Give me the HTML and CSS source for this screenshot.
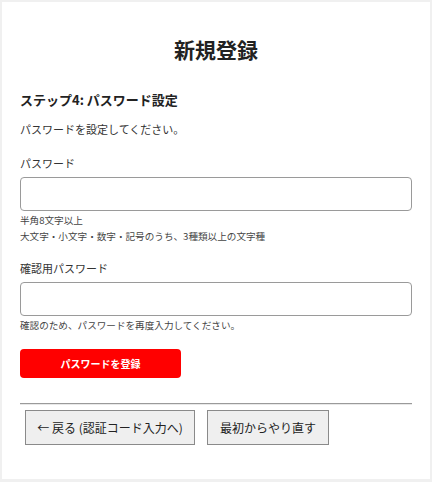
FILE: index.html
```html
<!DOCTYPE html>
<html lang="ja">
<head>
<meta charset="utf-8">
<title>新規登録</title>
<link rel="stylesheet" href="styles.css">
</head>
<body>
<main class="card">
  <h1 class="title">新規登録</h1>
  <h2 class="step">ステップ4: パスワード設定</h2>
  <p class="desc">パスワードを設定してください。</p>

  <div class="field">
    <label class="label" for="pw">パスワード</label>
    <input class="input" id="pw" type="password">
    <p class="hint">半角8文字以上<br>大文字・小文字・数字・記号のうち、3種類以上の文字種</p>
  </div>

  <div class="field field-2">
    <label class="label" for="pw2">確認用パスワード</label>
    <input class="input" id="pw2" type="password">
    <p class="hint">確認のため、パスワードを再度入力してください。</p>
  </div>

  <button class="submit" type="button">パスワードを登録</button>

  <hr class="divider">
  <div class="nav">
    <button class="nav-btn nav-back" type="button">← 戻る (認証コード入力へ)</button>
    <button class="nav-btn nav-restart" type="button">最初からやり直す</button>
  </div>
</main>
</body>
</html>
```

FILE: styles.css
```css
* { box-sizing: border-box; }

html, body {
  margin: 0;
  padding: 0;
}

body {
  background: #f0f0f0;
  padding: 2px 2px 3px 2px;
  font-family: "Noto Sans CJK JP", "Noto Sans", sans-serif;
  color: #333;
}

.card {
  background: #fff;
  padding: 32px 18px 34px 18px;
  min-height: 477px;
}

.title {
  margin: 0;
  font-size: 21px;
  line-height: 30px;
  font-weight: 700;
  text-align: center;
  color: #222;
}

.step {
  margin: 27px 0 0 0;
  font-size: 13px;
  line-height: 18px;
  font-weight: 700;
  color: #222;
}

.desc {
  margin: 12px 0 0 0;
  font-size: 11px;
  line-height: 16px;
}

.field {
  margin-top: 18px;
  display: flex;
  flex-direction: column;
}

.field-2 {
  margin-top: 16px;
}

.label {
  font-size: 11px;
  line-height: 16px;
  color: #333;
}

.input {
  margin-top: 6px;
  height: 34px;
  width: 100%;
  border: 1px solid #9a9a9a;
  border-radius: 4px;
  background: #fff;
  padding: 0 8px;
  font: inherit;
}

.hint {
  margin: 1px 0 0 0;
  font-size: 9.6px;
  line-height: 16px;
  color: #444;
}

.submit {
  margin-top: 16px;
  width: 161px;
  height: 29px;
  border: none;
  border-radius: 4px;
  background: #ff0000;
  color: #fff;
  font-family: inherit;
  font-size: 10px;
  font-weight: 700;
  padding: 0;
}

.divider {
  margin: 25px 0 0 0;
  border: none;
  border-top: 1px solid #9a9a9a;
  border-bottom: 1px solid #e8e8e8;
  height: 0;
}

.nav {
  display: flex;
  gap: 12px;
  padding: 5px 5px 0 5px;
}

.nav-btn {
  height: 35px;
  background: #efefef;
  border: 1px solid #8a8a8a;
  color: #222;
  font-family: inherit;
  font-size: 12px;
  padding: 0;
}

.nav-back { width: 170px; }
.nav-restart { width: 122px; }
```
